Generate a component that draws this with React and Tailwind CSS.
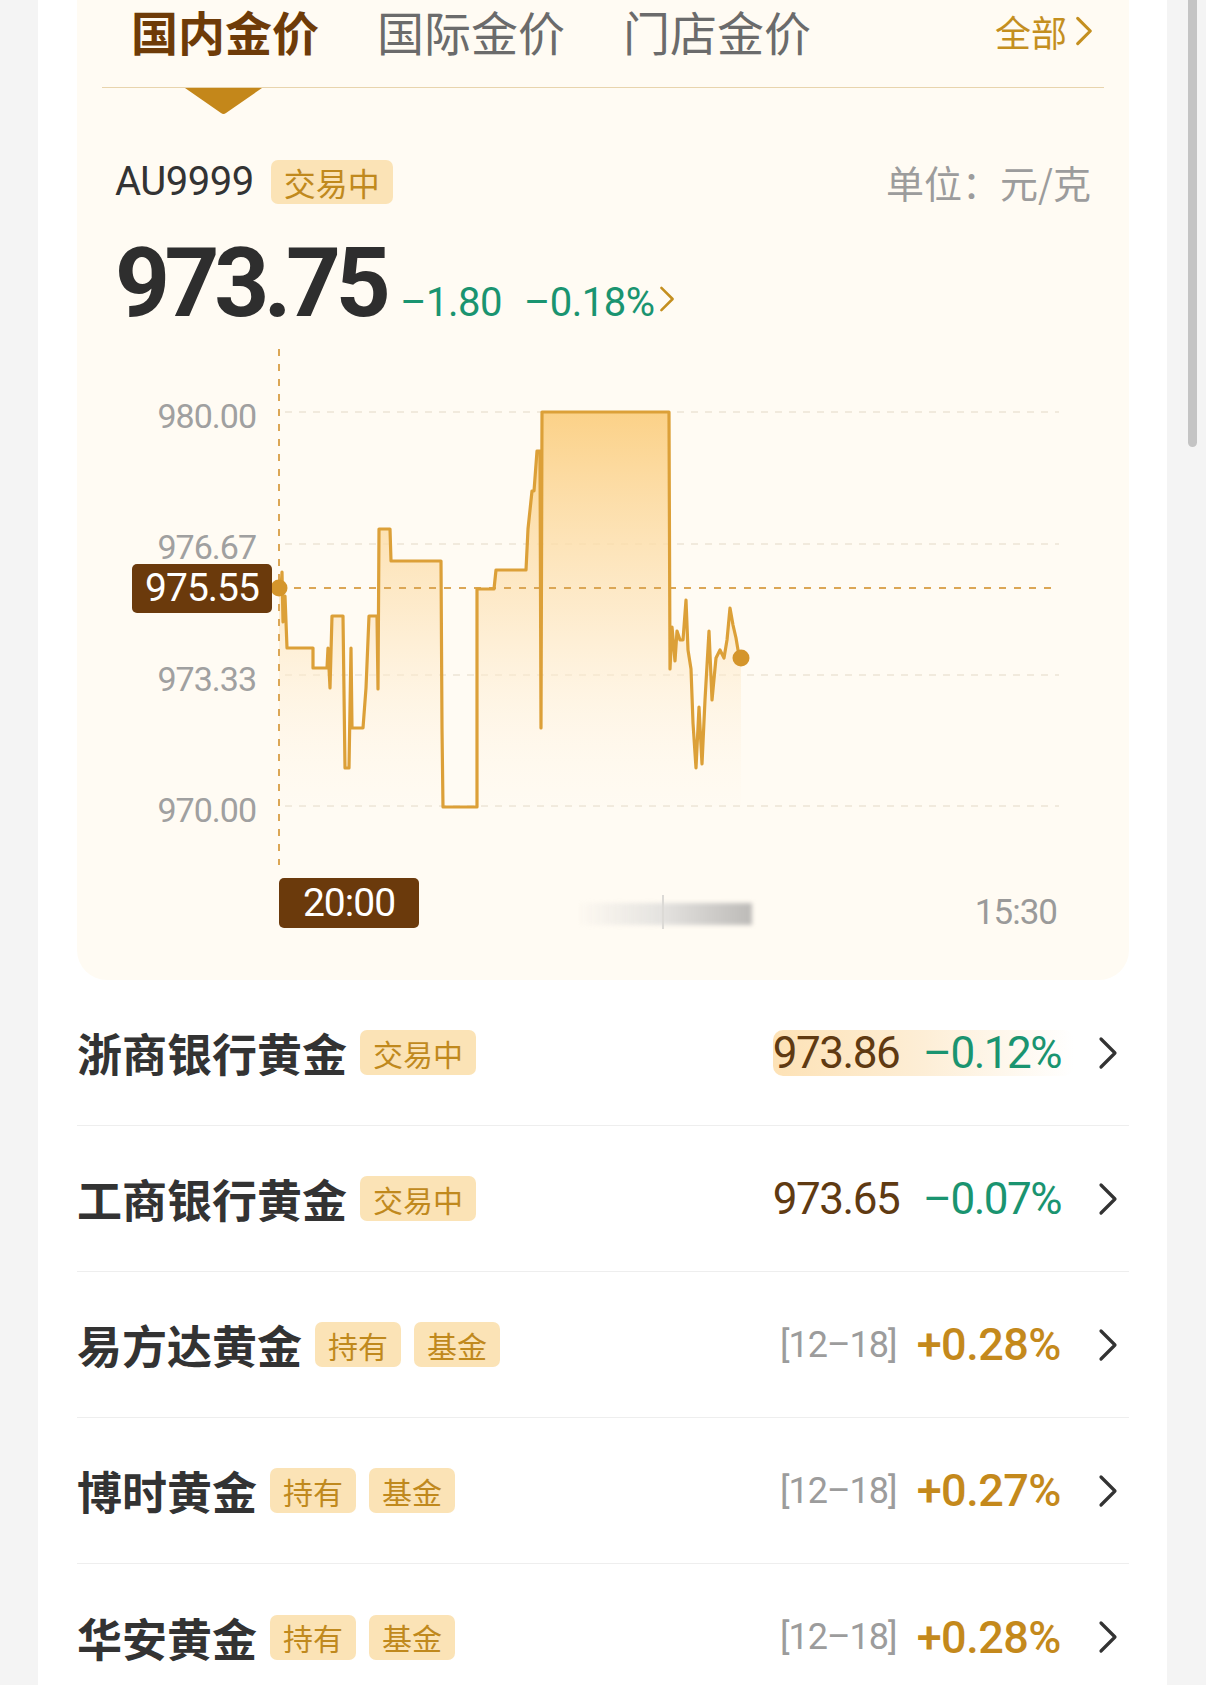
const LINE =
  "M279,589 L281,589 L282,572 L283,622 L285,596 L286,622 L287,648 L313,648 L313,668 L327,668 L328,648 L330,688 L332,616 L343,616 L345,768 L349,768 L351,648 L352,728 L363,728 L366,688 L369,616 L377,616 L378,689 L379,529 L390,529 L391,561 L441,561 L442,728 L443,807 L477,807 L477,589 L494,589 L496,570 L526,570 L528,529 L532,491 L534,491 L537,451 L540,451 L541,728 L542,412 L669,412 L670,669 L672,627 L675,661 L677,631 L680,640 L683,640 L686,600 L688,650 L691,669 L693,723 L696,768 L699,707 L702,764 L705,700 L709,631 L712,700 L716,658 L720,650 L724,658 L727,640 L730,608 L733,625 L736,638 L738,650 L741,658";

const NUM = "font-['Roboto','Noto_Sans_CJK_SC',sans-serif]";

const rows = [
  { name: "浙商银行黄金", tags: ["交易中"], price: "973.86", change: "–0.12%", hot: true },
  { name: "工商银行黄金", tags: ["交易中"], price: "973.65", change: "–0.07%" },
  { name: "易方达黄金", tags: ["持有", "基金"], date: "[12–18]", change: "+0.28%" },
  { name: "博时黄金", tags: ["持有", "基金"], date: "[12–18]", change: "+0.27%" },
  { name: "华安黄金", tags: ["持有", "基金"], date: "[12–18]", change: "+0.28%" },
];

function Chevron({ className = "", color = "#333", width = 3 }) {
  return (
    <svg className={className} viewBox="0 0 20 34" fill="none">
      <path d="M3 3 L17 17 L3 31" stroke={color} strokeWidth={width} strokeLinecap="round" strokeLinejoin="round" />
    </svg>
  );
}

function Tag({ children }) {
  return (
    <span className="flex h-[45px] items-center rounded-[7px] bg-[#fbe3b6] px-[13px] text-[30px] leading-none text-[#c0891d]">
      {children}
    </span>
  );
}

function Chart() {
  const yLabels = [
    ["980.00", 85],
    ["976.67", 216],
    ["973.33", 348],
    ["970.00", 479],
  ];
  return (
    <div className="relative flex-1">
      <svg className="absolute inset-0 h-full w-full" viewBox="77 331 1052 649">
        <defs>
          <linearGradient id="fill" x1="0" y1="412" x2="0" y2="806" gradientUnits="userSpaceOnUse">
            <stop offset="0" stopColor="#fbcf82" stopOpacity="0.95" />
            <stop offset="0.5" stopColor="#fde4bb" stopOpacity="0.7" />
            <stop offset="1" stopColor="#fff6e8" stopOpacity="0.1" />
          </linearGradient>
        </defs>
        {[412, 544, 675, 806].map((y) => (
          <line key={y} x1="285" x2="1059" y1={y} y2={y} stroke="#ede5d6" strokeWidth="1.5" strokeDasharray="7 7" />
        ))}
        <path d={LINE + " L741,806 L279,806 Z"} fill="url(#fill)" />
        <line x1="279" x2="279" y1="349" y2="865" stroke="#dba655" strokeWidth="2" strokeDasharray="7 8" />
        <line x1="279" x2="1059" y1="588" y2="588" stroke="#dba655" strokeWidth="2" strokeDasharray="7 8" />
        <path d={LINE} fill="none" stroke="#dca038" strokeWidth="3.2" strokeLinejoin="round" />
        <circle cx="279" cy="588" r="8.5" fill="#d4952b" />
        <circle cx="741" cy="658" r="8.5" fill="#d4952b" />
      </svg>

      {yLabels.map(([t, y]) => (
        <span
          key={t}
          className={`absolute left-0 w-[179px] -translate-y-1/2 text-right text-[34px] leading-none tracking-[-1px] text-[#a0a0a0] ${NUM}`}
          style={{ top: y }}
        >
          {t}
        </span>
      ))}

      <span
        className={`absolute left-[55px] top-[233px] flex h-[49px] w-[140px] items-center justify-center rounded-[5px] bg-[#6b3a0c] text-[39px] leading-none tracking-[-1px] text-white ${NUM}`}
      >
        975.55
      </span>
      <span
        className={`absolute left-[202px] top-[547px] flex h-[50px] w-[140px] items-center justify-center rounded-[5px] bg-[#6b3a0c] text-[39px] leading-none tracking-[-1px] text-white ${NUM}`}
      >
        20:00
      </span>
      <div className="absolute left-[498px] top-[572px] h-[22px] w-[177px] bg-linear-to-r from-transparent via-[#e4e2df] to-[#bdbbb8] blur-[2px]" />
      <div className="absolute left-[585px] top-[564px] h-[34px] w-[2px] bg-[#dcdad6]" />
      <span
        className={`absolute right-[72px] top-[581px] -translate-y-1/2 text-[35px] leading-none tracking-[-1px] text-[#9a9a9a] ${NUM}`}
      >
        15:30
      </span>
    </div>
  );
}

function PriceCard() {
  return (
    <section className="flex h-[980px] w-[1052px] flex-col rounded-b-[30px] bg-[#fffbf3]">
      <div className="mx-[25px] flex h-[88px] items-start border-b-[1.5px] border-[#e8d4ad] pl-[29px] pr-[11px] pt-[3px]">
        <div className="flex gap-[58px] text-[47px] leading-[56px]">
          <span className="font-bold text-[#6e3b08]">国内金价</span>
          <span className="text-[#6b6b6b]">国际金价</span>
          <span className="text-[#6b6b6b]">门店金价</span>
        </div>
        <div className="ml-auto flex h-[56px] items-center gap-[8px] text-[36px] leading-none text-[#c48f1f]">
          全部
          <Chevron className="h-[32px] w-[18px]" color="#c48f1f" width={3.5} />
        </div>
      </div>
      <svg className="ml-[108px] h-[27px] w-[77px]" viewBox="0 0 77 27">
        <path d="M0 0 H77 L41 25 Q38.5 27 36 25 Z" fill="#c4871a" />
      </svg>

      <div className="mt-[45px] flex h-[44px] items-center px-[38px]">
        <span className={`text-[40px] leading-none tracking-[-0.5px] text-[#333] ${NUM}`}>AU9999</span>
        <span className="ml-[17px] flex h-[44px] items-center rounded-[7px] bg-[#fbe3b6] px-[13px] text-[32px] leading-none text-[#c0891d]">
          交易中
        </span>
        <span className="ml-auto text-[38px] leading-none text-[#9c9c9c]">单位：元/克</span>
      </div>

      <div className={`mt-[31px] flex h-[96px] items-baseline px-[38px] ${NUM}`}>
        <span className="text-[96px] font-bold leading-none tracking-[-5.5px] text-[#2e2e2e]">973.75</span>
        <span className="ml-[15px] text-[40px] leading-none tracking-[-0.5px] text-[#1a9470]">–1.80</span>
        <span className="ml-[22px] text-[40px] leading-none tracking-[-0.5px] text-[#1a9470]">–0.18%</span>
        <Chevron className="ml-[4px] h-[28px] w-[16px] self-center translate-y-[16px]" color="#c48f1f" width={3.2} />
      </div>

      <Chart />
    </section>
  );
}

export default function App() {
  return (
    <div className="flex h-[1685px] w-[1206px] overflow-hidden bg-[#f4f4f4] font-['Noto_Sans_CJK_SC',sans-serif]">
      <div className="w-[38px] shrink-0" />
      <main className="w-[1129px] shrink-0 bg-white pl-[39px] pr-[38px]">
        <PriceCard />
        <ul>
          {rows.map((r, i) => (
            <li
              key={r.name}
              className={`flex h-[146px] items-center pr-[11px] ${i < rows.length - 1 ? "border-b-[1.5px] border-[#eeeeee]" : ""}`}
            >
              <span className="text-[45px] font-bold leading-none text-[#333]">{r.name}</span>
              <div className={`flex gap-[13px] ${r.tags.length > 1 ? "ml-[13px]" : "ml-[13px]"}`}>
                {r.tags.map((t) => (
                  <Tag key={t}>{t}</Tag>
                ))}
              </div>

              <div className={`ml-auto flex items-center ${NUM}`}>
                {r.price ? (
                  <span
                    className={`flex h-[46px] items-center gap-[24px] rounded-[10px] pr-[13px] ${
                      r.hot ? "bg-linear-to-r from-[#fde2b6] via-[#fdeed6] to-transparent" : ""
                    }`}
                  >
                    <span className="text-[44px] leading-none tracking-[-1.5px] text-[#5f3a12]">{r.price}</span>
                    <span className="text-[44px] leading-none tracking-[-1.5px] text-[#1a9470]">{r.change}</span>
                  </span>
                ) : (
                  <span className="flex items-center gap-[20px] pr-[13px]">
                    <span className="text-[36px] leading-none tracking-[-1px] text-[#9c9c9c]">{r.date}</span>
                    <span className="text-[45px] font-medium leading-none tracking-[-0.5px] text-[#c4891c]">{r.change}</span>
                  </span>
                )}
                <Chevron className="ml-[24px] h-[34px] w-[20px]" width={3.2} />
              </div>
            </li>
          ))}
        </ul>
      </main>
      <div className="flex-1">
        <div className="ml-[21px] h-[447px] w-[9px] rounded-b-full bg-[#c4c4c4]" />
      </div>
    </div>
  );
}
